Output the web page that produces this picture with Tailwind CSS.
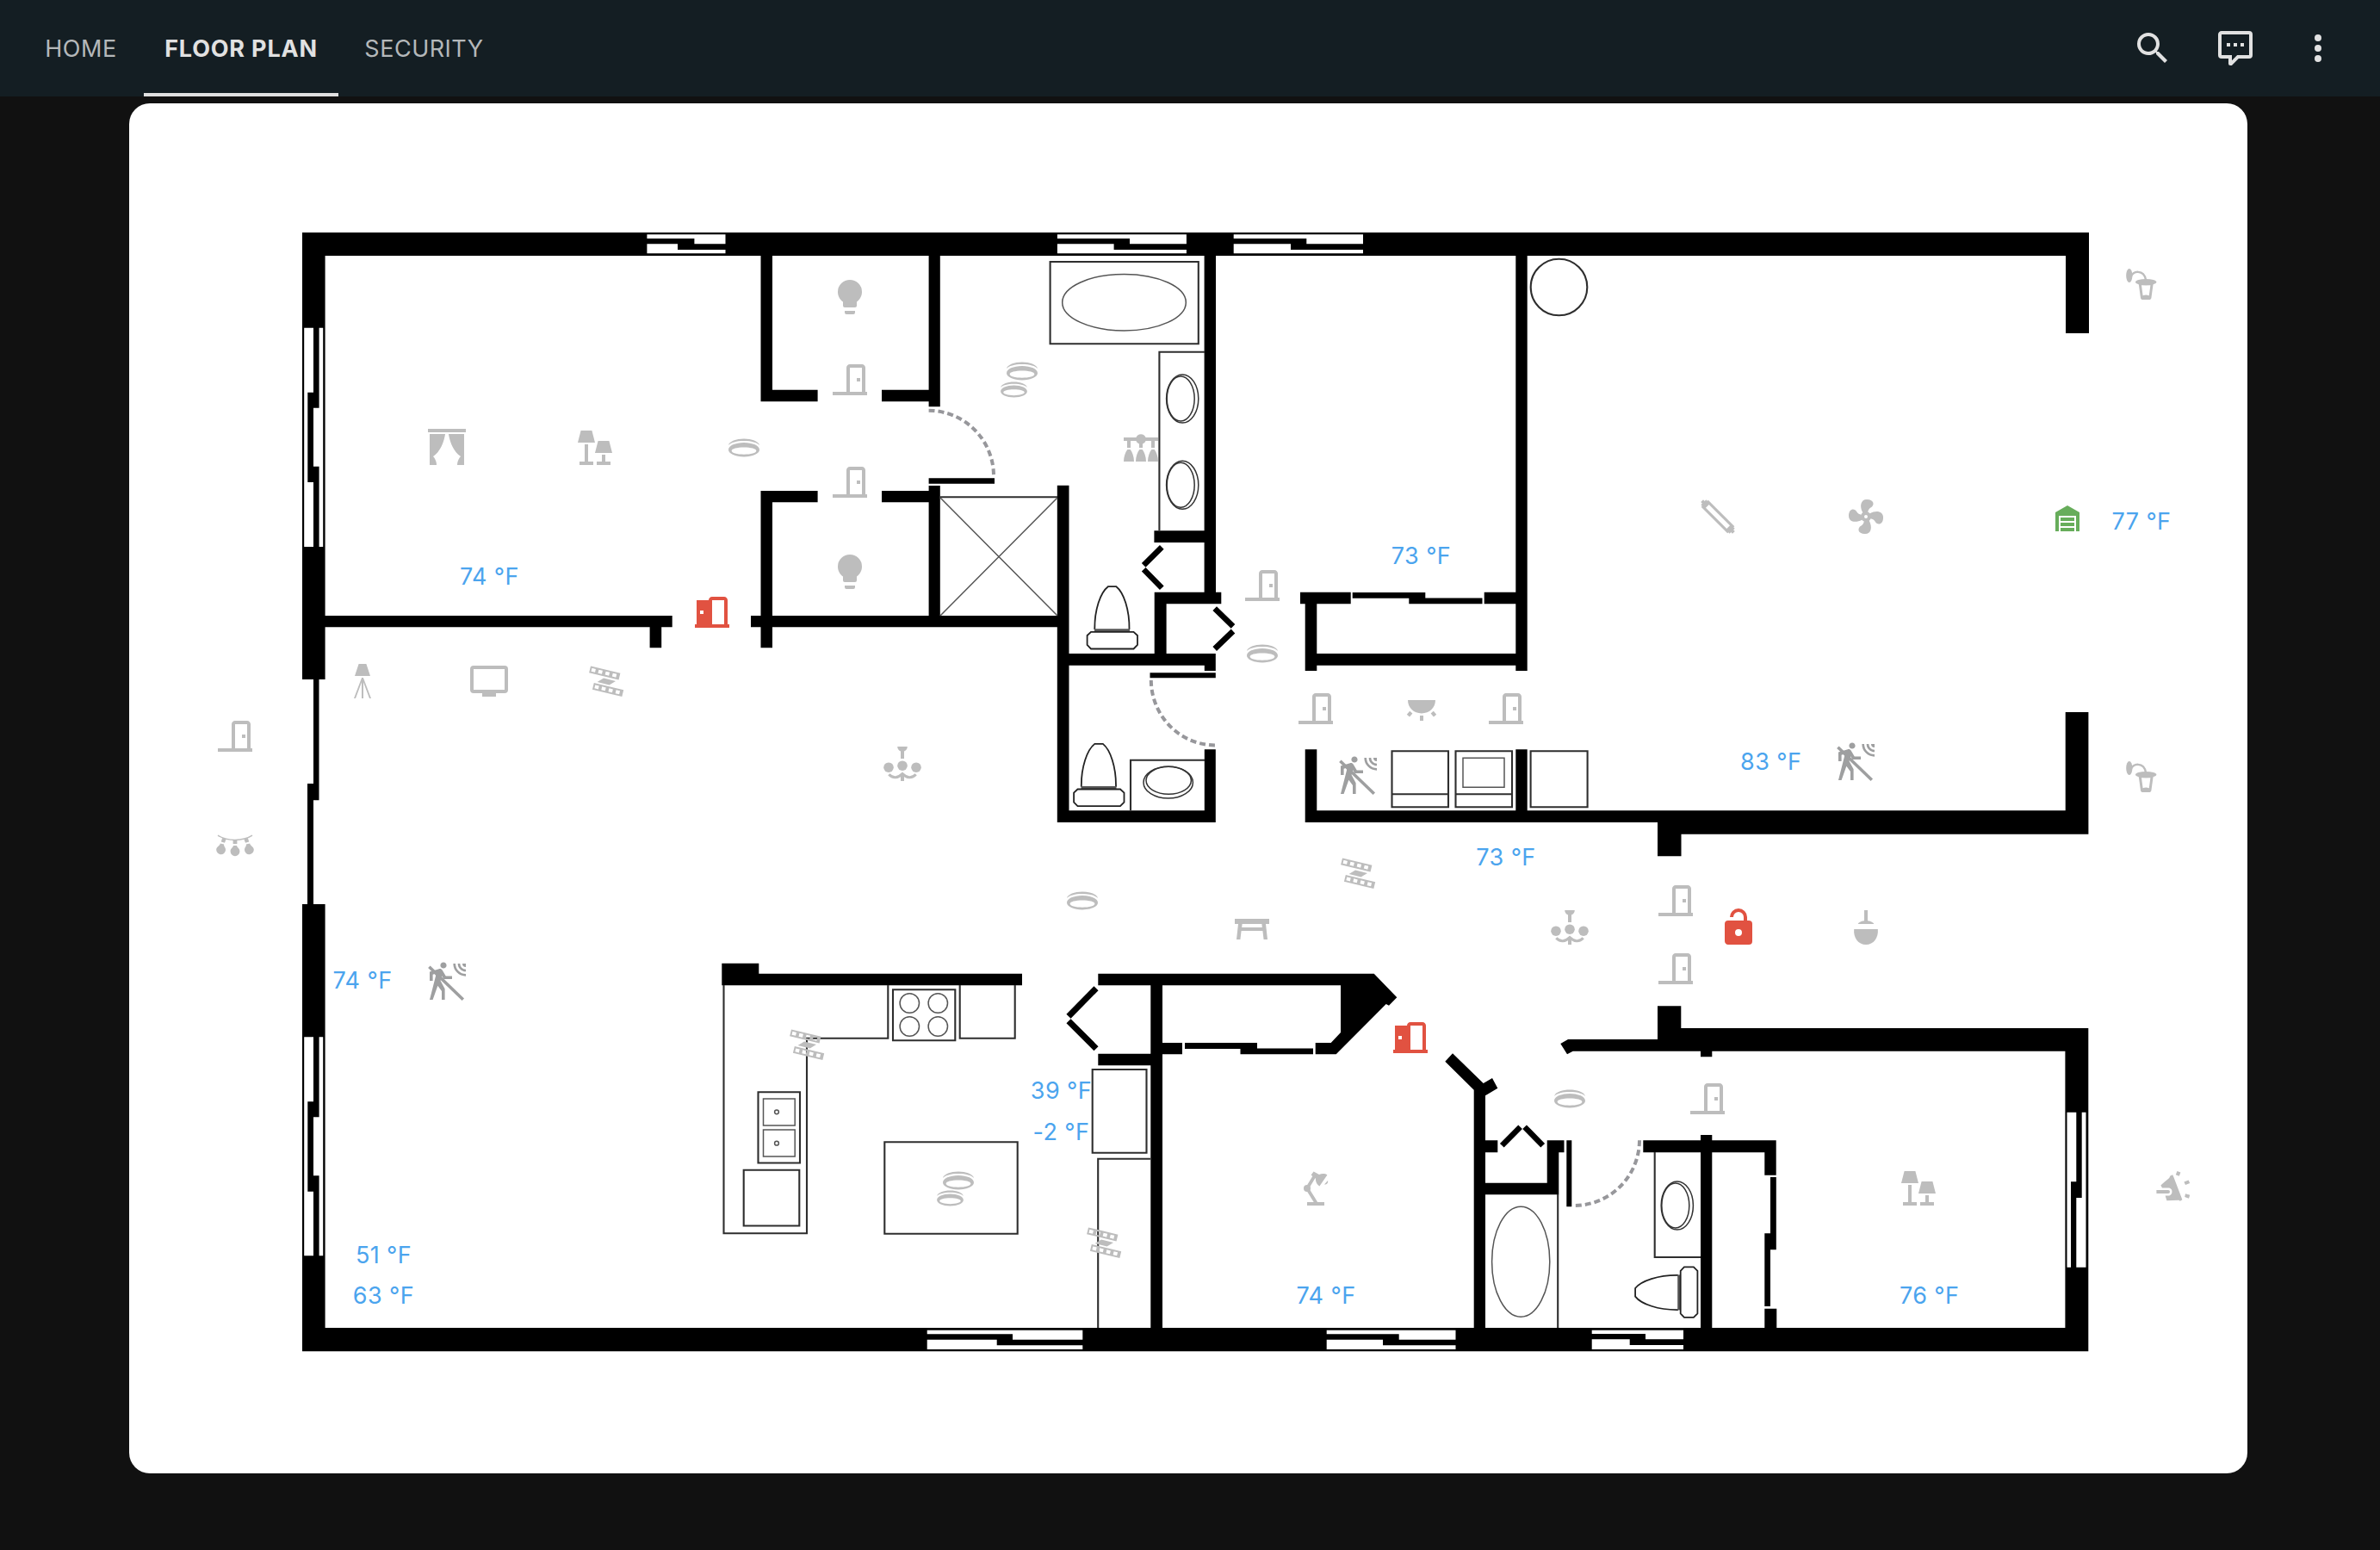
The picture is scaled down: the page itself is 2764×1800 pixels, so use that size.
<!DOCTYPE html>
<html lang="en">
<head>
<meta charset="utf-8">
<title>Floor Plan</title>
<script src="https://cdn.jsdelivr.net/npm/@tailwindcss/browser@4"></script>
</head>
<body class="bg-[#111111] w-[2764px] h-[1800px] overflow-hidden font-['Inter','Liberation_Sans',sans-serif]">

<!-- icon library, 24-unit grid -->
<svg class="hidden" xmlns="http://www.w3.org/2000/svg">
  <symbol id="search" viewBox="0 0 24 24"><path d="M9.5,3A6.5,6.5 0 0,1 16,9.5C16,11.11 15.41,12.59 14.44,13.73L14.71,14H15.5L20.5,19L19,20.5L14,15.5V14.71L13.73,14.44C12.59,15.41 11.11,16 9.5,16A6.5,6.5 0 0,1 3,9.5A6.5,6.5 0 0,1 9.5,3M9.5,5C7,5 5,7 5,9.5C5,12 7,14 9.5,14C12,14 14,12 14,9.5C14,7 12,5 9.5,5Z"/></symbol>
  <symbol id="chat" viewBox="0 0 24 24"><path d="M9,22A1,1 0 0,1 8,21V18H4A2,2 0 0,1 2,16V4C2,2.89 2.9,2 4,2H20A2,2 0 0,1 22,4V16A2,2 0 0,1 20,18H13.9L10.2,21.71C10,21.9 9.75,22 9.5,22V22H9M10,16V19.08L13.08,16H20V4H4V16H10M17,11H15V9H17V11M13,11H11V9H13V11M9,11H7V9H9V11Z"/></symbol>
  <symbol id="dots" viewBox="0 0 24 24"><path d="M12,16A2,2 0 0,1 14,18A2,2 0 0,1 12,20A2,2 0 0,1 10,18A2,2 0 0,1 12,16M12,10A2,2 0 0,1 14,12A2,2 0 0,1 12,14A2,2 0 0,1 10,12A2,2 0 0,1 12,10M12,4A2,2 0 0,1 14,6A2,2 0 0,1 12,8A2,2 0 0,1 10,6A2,2 0 0,1 12,4Z"/></symbol>
  <symbol id="curtains" viewBox="0 0 24 24"><path d="M23 3H1V1H23V3M2 22H6C6 19 4 17 4 17C10 13 11 4 11 4H2V22M22 4H13C13 4 14 13 20 17C20 17 18 19 18 22H22V4Z"/></symbol>
  <symbol id="lamps" viewBox="0 0 24 24"><path d="M3.8 2H10.2L12 9H2L3.8 2M6 10H8V20H11V22H3V20H6V10M13.8 8H20.2L22 15H12L13.8 8M16 16H18V20H21V22H13V20H16V16Z"/></symbol>
  <symbol id="recessed" viewBox="0 0 24 24"><path fill-rule="evenodd" d="M12 9C7 9 3 10.8 3 13.1S7 17.2 12 17.2S21 15.4 21 13.1S17 9 12 9M12 15.9C8 15.9 4.8 15 4.8 13.8S8 11.8 12 11.8S19.2 12.6 19.2 13.8S16 15.9 12 15.9Z"/><path d="M3 10.5C3.5 8.3 7.5 6.8 12 6.8S20.5 8.3 21 10.5C19.8 9 16.3 8 12 8S4.2 9 3 10.5Z"/></symbol>
  <symbol id="bulb" viewBox="0 0 24 24"><path d="M12,2A7,7 0 0,0 5,9C5,11.38 6.19,13.47 8,14.74V17A1,1 0 0,0 9,18H15A1,1 0 0,0 16,17V14.74C17.81,13.47 19,11.38 19,9A7,7 0 0,0 12,2M9,21A1,1 0 0,0 10,22H14A1,1 0 0,0 15,21V20H9V21Z"/></symbol>
  <symbol id="door" viewBox="0 0 24 24"><path d="M16,11H18V13H16V11M12,3H19C20.11,3 21,3.89 21,5V19H22V21H2V19H10V5C10,3.89 10.89,3 12,3M12,5V19H19V5H12Z"/></symbol>
  <symbol id="door-open" viewBox="0 0 24 24"><path fill-rule="evenodd" d="M12,3C10.89,3 10,3.89 10,5H3V19H2V21H22V19H21V5C21,3.89 20.11,3 19,3H12M12,5H19V19H12V5M5,11H7V13H5V11Z"/></symbol>
  <symbol id="vanity" viewBox="0 0 24 24"><path d="M2 6H9.2A3 3 0 0 1 14.8 6H22V8H20V12H18V8H14.8A3 3 0 0 1 13 9.8V12H11V9.8A3 3 0 0 1 9.2 8H6V12H4V8H2ZM2 20C2 17 3 14.5 4.2 13H5.8C7 14.5 8 17 8 20ZM9 20C9 17 10 14.5 11.2 13H12.8C14 14.5 15 17 15 20ZM16 20C16 17 17 14.5 18.2 13H19.8C21 14.5 22 17 22 20Z"/></symbol>
  <symbol id="floor-lamp" viewBox="0 0 24 24"><path d="M9.8 2H14.2L16.5 9H7.5ZM11.55 10H12.45L17 22H16L12.5 12.6V22H11.5V12.6L8 22H7Z"/></symbol>
  <symbol id="tv" viewBox="0 0 24 24"><path fill-rule="evenodd" d="M21,17H3V5H21ZM21,3H3A2,2 0 0,0 1,5V17A2,2 0 0,0 3,19H8V21H16V19H21A2,2 0 0,0 23,17V5A2,2 0 0,0 21,3Z"/></symbol>
  <symbol id="strip" viewBox="0 0 24 24"><path transform="translate(3 3.2) rotate(13.6)" fill-rule="evenodd" d="M0 0H17.7V4H0ZM1 1H3.3V3H1ZM5.1 1H7.4V3H5.1ZM9.3 1H11.6V3H9.3ZM13.5 1H15.8V3H13.5Z"/><path transform="translate(4.9 13) rotate(13.6)" fill-rule="evenodd" d="M0 0H17.7V4H0ZM1 1H3.3V3H1ZM5.1 1H7.4V3H5.1ZM9.3 1H11.6V3H9.3ZM13.5 1H15.8V3H13.5Z"/><path d="M6.8 12.5L10.5 10.3L17.5 12L13.8 14.2Z"/></symbol>
  <symbol id="chandelier" viewBox="0 0 24 24"><path d="M9.1 2H14.9C14.9 3.5 14 4.4 13 4.7V9H11V4.7C10 4.4 9.1 3.5 9.1 2ZM11 18H13V22H11Z"/><circle cx="12" cy="13.1" r="2.9"/><circle cx="4" cy="14.1" r="2.9"/><circle cx="20" cy="14.1" r="2.9"/><path fill="none" stroke="currentColor" stroke-width="1.6" d="M4.2 18.1C6.5 20.8 9.5 20.2 12 17.8C14.5 20.2 17.5 20.8 19.8 18.1"/></symbol>
  <symbol id="dome" viewBox="0 0 24 24"><path d="M4 7H20C20 11.5 16.5 14.7 12 14.7S4 11.5 4 7ZM11 16H13V19H11ZM5.1 13.4L6.7 14.7L5 16.7L3.4 15.4ZM18.9 13.4L17.3 14.7L19 16.7L20.6 15.4Z"/></symbol>
  <symbol id="motion-off" viewBox="0 0 24 24"><mask id="cut"><rect width="24" height="24" fill="#fff"/><path d="M1 .3L24 22.4" stroke="#000" stroke-width="1.5"/></mask><path mask="url(#cut)" d="M10,0.2C9,0.2 8.2,1 8.2,2C8.2,3 9,3.8 10,3.8C11,3.8 11.8,3 11.8,2C11.8,1 11,0.2 10,0.2M7.92,4.03C7.75,4.03 7.58,4.06 7.42,4.11L2,5.8V11H3.8V7.33L5.91,6.67L2,22H3.8L6.67,13.89L9,17V22H10.8V15.59L8.31,11.05L9.04,8.18L10.12,10H15V8.2H11.38L9.38,4.87C9.08,4.37 8.54,4.03 7.92,4.03Z"/><path d="M15.67,1A7.33,7.33 0 0,0 23,8.33V7A6,6 0 0,1 17,1H15.67M18.33,1C18.33,3.58 20.42,5.67 23,5.67V4.33C21.16,4.33 19.67,2.84 19.67,1H18.33M21,1A2,2 0 0,0 23,3V1H21Z"/><path fill="none" stroke="currentColor" stroke-width="1.8" d="M1.7 2.9L21.4 21.9"/></symbol>
  <symbol id="table" viewBox="0 0 24 24"><path fill-rule="evenodd" d="M2 7H22V10H20L21 19H18.8L18.2 14H5.8L5.2 19H3L4 10H2ZM6.3 10L6.1 12H17.9L17.7 10Z"/></symbol>
  <symbol id="sconce" viewBox="0 0 24 24"><ellipse cx="4.9" cy="7" rx="1.8" ry="4"/><path fill="none" stroke="currentColor" stroke-width="1.2" d="M6 7.6C6.5 4.2 13.5 3.2 14.5 9.5"/><ellipse cx="14.6" cy="10.8" rx="6.1" ry="1.8"/><path fill-rule="evenodd" d="M10.4 12H18.8L17.7 20C17.6 20.7 17 21 16.5 21H12.7C12.2 21 11.6 20.7 11.5 20ZM12 12.6L12.8 18.6C14 18.2 15.2 18.2 16.4 18.6L17.2 12.6Z"/></symbol>
  <symbol id="tube" viewBox="0 0 24 24"><path transform="rotate(45 12 12)" fill-rule="evenodd" d="M.2 9.9H1.2V9.1H22.8V9.9H23.8V11H25V13H23.8V14.1H22.8V14.9H1.2V14.1H.2V13H-1V11H.2ZM3.4 10.7V13.3H20.6V10.7Z"/></symbol>
  <symbol id="fan" viewBox="0 0 24 24"><path d="M12,11A1,1 0 0,0 11,12A1,1 0 0,0 12,13A1,1 0 0,0 13,12A1,1 0 0,0 12,11M12.5,2C17,2 17.11,5.57 14.75,6.75C13.76,7.24 13.32,8.29 13.13,9.22C13.61,9.42 14.03,9.73 14.35,10.13C18.05,8.13 22.03,8.92 22.03,12.5C22.03,17 18.46,17.1 17.28,14.73C16.78,13.74 15.72,13.3 14.79,13.11C14.59,13.59 14.28,14 13.88,14.34C15.87,18.03 15.08,22 11.5,22C7,22 6.91,18.42 9.27,17.24C10.25,16.75 10.69,15.71 10.89,14.79C10.4,14.59 9.97,14.27 9.65,13.87C5.96,15.85 2,15.07 2,11.5C2,7 5.56,6.89 6.74,9.26C7.24,10.25 8.29,10.68 9.22,10.87C9.41,10.39 9.73,9.97 10.14,9.65C8.15,5.96 8.94,2 12.5,2Z"/></symbol>
  <symbol id="garage" viewBox="0 0 24 24"><path d="M19,20H17V11H7V20H5V9L12,5L19,9V20M8,12H16V14H8V12M8,15H16V17H8V15M16,18V20H8V18H16Z"/></symbol>
  <symbol id="unlock" viewBox="0 0 24 24"><path d="M18,8A2,2 0 0,1 20,10V20A2,2 0 0,1 18,22H6C4.89,22 4,21.1 4,20V10A2,2 0 0,1 6,8H15V6A3,3 0 0,0 12,3A3,3 0 0,0 9,6H7A5,5 0 0,1 12,1A5,5 0 0,1 17,6V8H18M12,17A2,2 0 0,0 14,15A2,2 0 0,0 12,13A2,2 0 0,0 10,15A2,2 0 0,0 12,17Z"/></symbol>
  <symbol id="pendant" viewBox="0 0 24 24"><path d="M11 2H13V8.1C15 8.4 16.3 9.1 16.7 10H7.3C7.7 9.1 9 8.4 11 8.1ZM5.1 13H18.9C19.4 18 16.5 22 12 22S4.6 18 5.1 13Z"/></symbol>
  <symbol id="desk-lamp" viewBox="0 0 24 24"><path d="M10.8 2.2L14 4C15.5 3.2 17.5 3.3 18.7 4.2L14.2 10.7C12.7 9.8 11.8 8.3 12 6.4L9.3 4.2ZM7 20H17V22H7ZM19 7.5C19.4 8.9 18.4 10 17 9.7Z"/><circle cx="7" cy="12" r="2"/><path fill="none" stroke="currentColor" stroke-width="1.9" d="M11.4 4.8L7 12L12.2 20.4"/></symbol>
  <symbol id="spot" viewBox="0 0 24 24"><path d="M10.2 4.7L11.6 4.1L12.2 5.5L17.2 18.6L15.9 19.4L15.2 18.9L8.2 19.1L7.3 16.2H9.6A2.3 2.3 0 0 0 9.6 11.8H5.5L4.7 10.2C6.5 8.6 8.4 7 9.6 6ZM2.2 13H9A1 1 0 0 1 9 15H2.2ZM14.2 2L16.2 2.8L15.4 4.9L13.4 4.1ZM18.2 8.2L20.8 7.3L21.6 9L19 10ZM19 15.1L21.6 15.9L21 17.9L18.6 17Z"/></symbol>
  <symbol id="string" viewBox="0 0 24 24"><path fill="none" stroke="currentColor" stroke-width=".7" d="M2 6.1C7.5 9.6 16.5 9.6 22 6.1"/><path d="M10.8 8.8H13.2V11H10.8ZM11 12H13C13 13 14.8 13.6 14.7 15.4A2.7 2.7 0 0 1 9.3 15.4C9.2 13.6 11 13 11 12ZM4.6 7.5L6.8 8.3L6 10.4L3.9 9.7ZM3.4 10.7L5.6 11.3C5.2 12.2 6.7 13.2 6.5 14.6A2.7 2.7 0 0 1 1.1 14.2C1.3 12.4 3.2 12 3.4 10.7ZM19.4 7.5L17.2 8.3L18 10.4L20.1 9.7ZM20.6 10.7L18.4 11.3C18.8 12.2 17.3 13.2 17.5 14.6A2.7 2.7 0 0 0 22.9 14.2C22.7 12.4 20.8 12 20.6 10.7Z"/></symbol>
</svg>

<header class="flex h-28 items-stretch justify-between bg-[#141e23] pl-[29px] pr-12">
  <nav class="flex gap-2 text-[27px] leading-none">
    <a class="flex w-[130px] items-center justify-center text-[#b4b8ba] tracking-[0.6px]">HOME</a>
    <a class="flex w-[226px] items-center justify-center border-b-4 border-[#e1e1e1] pt-1 font-bold text-[#e1e1e1] tracking-[0.8px]">FLOOR PLAN</a>
    <a class="flex w-[183px] items-center justify-center text-[#b4b8ba] tracking-[0.5px]">SECURITY</a>
  </nav>
  <div class="flex items-center gap-12 text-[#e1e1e1]">
    <svg class="size-12 fill-current"><use href="#search"/></svg>
    <svg class="size-12 fill-current"><use href="#chat"/></svg>
    <svg class="size-12 fill-current"><use href="#dots"/></svg>
  </div>
</header>

<main class="flex pl-[150px] pt-2">
  <div id="plan" class="relative h-[1591px] w-[2460px] overflow-hidden rounded-3xl bg-white">
    <svg class="block h-[1590px] w-full" viewBox="150 120 2460 1590" xmlns="http://www.w3.org/2000/svg">
      <!-- walls -->
      <path fill="#000" d="M351 270H2426V387H2399V297H1773.7V779H1760.3V772.7H1529.3V779H1515.7V701.3H1510V687.7H1568.7V701.3H1529.3V759H1760.3V701.3H1723.7V687.7H1760.3V297H1412V687.7H1418.3V701.3H1354.6V759H1411.8V779H1398.8V772.7H1241.5V941.3H1398.8V870.3H1411.8V955H1227.8V728.3H897V752.3H883.5V728.3H872V715H883.5V570H949.6V583.3H897V715H1078.6V583.3H1024V570H1078.6V564H1091.8V715H1227.8V563.7H1241.5V759H1340.7V687.7H1398.6V630H1340.4V616.3H1398.6V297H1091.8V472.3H1078.6V466.3H1024V452.7H1078.6V297H897V452.7H949.6V466.3H883.5V297H377.6V715H780.7V728.3H768.2V752.3H754.6V728.3H377.6V789H351Z"/>
      <path fill="#000" d="M1078.6 555.3H1155V561.7H1078.6ZM1335.5 781.3H1411.8V787.3H1335.5ZM1570.7 688H1655.3V694.5H1721.5V701.3H1636.3V694.7H1570.7Z"/>
      <path fill="#000" d="M364 789H370.5V929.3H364V1050H357V910H364Z"/>
      <path fill="#000" d="M1515.7 870.3H1529.3V941.3H1760.3V870.3H1773.7V941.3H2398.7V827H2425.4V968.7H1952.5V994.3H1925V955H1515.7Z"/>
      <path fill="#000" d="M351 1050H377.6V1542H1336.3V1237.3H1275.3V1223.7H1336.3V1144.2H1275.3V1130.7H1595.7L1622.3 1158.3L1613 1167.7L1609.7 1166L1551.7 1224.3H1527.7V1211H1545.7L1557 1199V1144.2H1350V1211H1373V1224.3H1350V1542H1711.7V1265.7L1678.3 1232.7L1687 1223.3L1722.7 1258L1733 1252L1739.3 1263.7L1725 1272.3V1324.3H1739.3V1338.3H1725V1373.7H1796.7V1324.3H1816.5V1338.3H1810.3V1387.3H1725V1542H1975V1338.3H1908.3V1324.3H1975V1318H1988.3V1324.3H2062.7V1364.7H2049.3V1338.3H1988.3V1542H2049.3V1519.7H2063.3V1542H2398.4V1220.7H1988.3V1227.3H1975V1220.7H1826.7L1820 1224.3L1812.3 1212L1821 1207H1925V1168.2H1952.3V1194H2425.3V1569.3H351Z"/>
      <path fill="#000" d="M838.3 1118.7H881.3V1130.7H1187V1144.2H838.3ZM1376 1211H1460V1217.5H1525V1224.3H1440.5V1218H1376ZM1819.3 1324.3H1825.3V1401.3H1819.3ZM2056 1367H2062.8V1451.3H2056V1517H2049.3V1432.3H2056Z"/>
      <!-- bifold doors -->
      <path fill="none" stroke="#000" stroke-width="6.6" d="M1349.3 635.3L1328.2 656.3M1328.2 661.3L1349.3 682.7M1410.7 706.7L1432 727.3M1432 733L1410.7 753.5M1744.3 1330.3L1765.6 1308.7M1770.6 1308.7L1791.7 1330.3"/>
      <path fill="none" stroke="#000" stroke-width="7.2" d="M1273 1147.7L1241 1180.3M1241 1185.8L1273 1217.7"/>
      <!-- windows -->
      <path fill="#fff" d="M751.4 272.3H842.5V294.3H751.4ZM1227.9 272.3H1377.9V294.3H1227.9ZM1432.7 272.3H1583V294.3H1432.7ZM353.2 380.7H375.2V635H353.2ZM353.2 1204.3H375.2V1458.3H353.2ZM2400.5 1291.7H2422.5V1471.7H2400.5ZM1076.7 1544.7H1257.3V1567H1076.7ZM1540.7 1544.7H1690.5V1567H1540.7ZM1848.7 1544.7H1955V1567H1848.7Z"/>
      <path fill="#000" d="M751 277H806.4V283.3H843V290H787V283.3H751ZM1227 277H1312V283.3H1378V290H1293.6V283.3H1227ZM1432 277H1517.3V283.3H1583V290H1499V283.3H1432Z"/>
      <path fill="#000" d="M364 380H370.6V473.7H364V541.7H370.6V636H364V560H357.3V455.7H364ZM364 1204H370.6V1297.3H364V1365.3H370.6V1459H364V1383.7H357.3V1279.3H364ZM2411.3 1291H2417.7V1391H2411.3V1472H2405V1372.3H2411.3Z"/>
      <path fill="#000" d="M1076 1549.3H1176V1555.7H1258V1562.3H1157.7V1555.7H1076ZM1540 1549.3H1624.7V1555.7H1691V1562.3H1606V1555.7H1540ZM1848 1549H1911V1555.3H1956V1562H1892.7V1555.3H1848Z"/>
      <!-- door swings -->
      <path fill="none" stroke="#97979b" stroke-width="4" stroke-dasharray="7 4" d="M1078.6 476.7A76 76 0 0 1 1154 553M1336.8 790A75 76 0 0 0 1412 865.5M1904 1324.3A76 76 0 0 1 1828 1400"/>
      <!-- fixtures -->
      <g fill="none" stroke="#2e2e2e" stroke-width="2.1">
        <path d="M1092 577.2H1228M1219.6 304H1391.8V399.3H1219.6ZM1346.4 616V408.7H1399M1313 941V882.7H1399"/>
        <circle cx="1810.5" cy="333.5" r="32.8"/>
        <path d="M840.5 1144V1432.3H937V1205.7H1031.3V1144M1037 1149.3H1109.3V1208.3H1037ZM1114.7 1144V1205.7H1178.7V1144"/>
        <path d="M1268.7 1242H1331.5V1338.7H1268.7ZM1275.2 1542V1345.7H1336M880.5 1268.3H929V1350.5H880.5ZM863.7 1358.7H928.3V1423.5H863.7ZM1027.3 1326.3H1181.7V1432.7H1027.3Z"/>
        <path d="M1616.5 872.3H1682V937.3H1616.5ZM1616.5 922.3H1682M1690.5 872.3H1756V937.3H1690.5ZM1690.5 922.3H1756M1777.6 872.3H1843.6V937.3H1777.6Z"/>
        <path d="M1809.2 1387V1542M1921.7 1338V1460H1975"/>
      </g>
      <g fill="none" stroke="#555" stroke-width="1.5">
        <path d="M1092 578L1228 715M1228 578L1092 715"/>
        <ellipse cx="1305.5" cy="351.2" rx="71.8" ry="32.8"/>
        <ellipse cx="1766.2" cy="1465.2" rx="33.6" ry="64"/>
        <path d="M1699 880.3H1747V914.3H1699ZM886.5 1276H923.2V1307H886.5ZM886.5 1312H923.2V1343H886.5Z"/>
        <circle cx="902" cy="1291.3" r="2.4"/><circle cx="902" cy="1327.7" r="2.4"/>
        <circle cx="1056.3" cy="1165" r="11.2"/><circle cx="1089.3" cy="1165" r="11.2"/>
        <circle cx="1056.3" cy="1192" r="11.2"/><circle cx="1089.3" cy="1192" r="11.2"/>
      </g>
      <g fill="none" stroke="#333" stroke-width="1.5">
        <ellipse cx="1373.2" cy="463" rx="18.6" ry="28"/><ellipse cx="1371.2" cy="463" rx="16" ry="26"/>
        <ellipse cx="1373.2" cy="563.3" rx="18.6" ry="28"/><ellipse cx="1371.2" cy="563.3" rx="16" ry="26"/>
        <ellipse cx="1947.8" cy="1400" rx="18.6" ry="28"/><ellipse cx="1945.8" cy="1400" rx="16" ry="26"/>
        <ellipse cx="1356.7" cy="908.7" rx="28.7" ry="18.4"/><ellipse cx="1357.2" cy="906.3" rx="26.2" ry="16"/>
      </g>
      <g id="wc" fill="none" stroke="#222" stroke-width="1.8">
        <path d="M1271.3 731C1271 708 1278 688 1286.8 681.2H1296.4C1305 688 1311.8 708 1311.5 731"/>
        <path stroke="#555" stroke-width="3.4" d="M1271 732H1312"/>
        <path d="M1267 733.8H1316.5L1321 738V749L1316.5 753.5H1267L1262.6 749V738Z"/>
      </g>
      <use href="#wc" x="-15.5" y="182.7"/>
      <use href="#wc" transform="translate(1217.9 2792.4) rotate(-90)"/>
    </svg>
  </div>
</main>

<script>
// Entities are placed by the centre point of each icon on the screen canvas.
const GREY = 'text-[#bdbdbd]', DIM = 'text-[#9e9fa0]', RED = 'text-[#e15241]', GREEN = 'text-[#67ad5b]';
const icons = [
  ['curtains',519,520],['lamps',691,520],['recessed',864,520],['bulb',987,345],['bulb',987,664],
  ['door',987,441],['door',987,560],['recessed',1186.5,431.3],['recessed',1177.3,452,41],['vanity',1325,520],
  ['door-open',827,711,48,RED],['door',1466,680],['recessed',1466,759],['door',1528,823],['dome',1651,823],['door',1749,823],
  ['motion-off',1577,902,48,DIM],['motion-off',2155,886,48,DIM],['motion-off',519,1141,48,DIM],
  ['tube',1995,600],['fan',2167,600],['garage',2401,600.5,48,GREEN],['sconce',2487,330],['sconce',2487,902],
  ['floor-lamp',421,791],['tv',568,791],['strip',704,791],['door',273,855],['string',273,982],
  ['chandelier',1048,887],['strip',1577,1014],['recessed',1257,1046],['table',1454,1077],['chandelier',1823,1077],
  ['door',1946,1046],['door',1946,1125],['unlock',2019,1077,48,RED],['pendant',2167,1077],
  ['door-open',1638,1205,48,RED],['strip',937,1213],['recessed',1823,1276],['door',1983,1276],
  ['recessed',1112.6,1370.5],['recessed',1103.5,1391,41],['strip',1282,1443],['desk-lamp',1528,1380],
  ['lamps',2228,1380],['spot',2523.5,1380]
];
const temps = [
  ['74 °F',568.4,669],['73 °F',1650.5,645],['77 °F',2487,605],['83 °F',2056.7,884],['73 °F',1749,995],['74 °F',421,1138],
  ['39 °F',1232.5,1266],['-2 °F',1232.5,1314],['74 °F',1540,1504],['76 °F',2240.7,1504],['51 °F',445.5,1457],['63 °F',445.5,1504]
];
let html = '';
for (const [id, x, y, s = 48, c = GREY] of icons)
  html += `<svg class="absolute fill-current overflow-visible ${c}" style="left:${x - 150 - s / 2}px;top:${y - 120 - s / 2}px;width:${s}px;height:${s}px"><use href="#${id}"/></svg>`;
for (const [t, x, y] of temps)
  html += `<span class="absolute -translate-1/2 whitespace-nowrap text-[27px] leading-none tracking-[0.4px] text-[#4ba4ee]" style="left:${x - 150}px;top:${y - 120}px">${t}</span>`;
document.getElementById('plan').insertAdjacentHTML('beforeend', html);
</script>
</body>
</html>
